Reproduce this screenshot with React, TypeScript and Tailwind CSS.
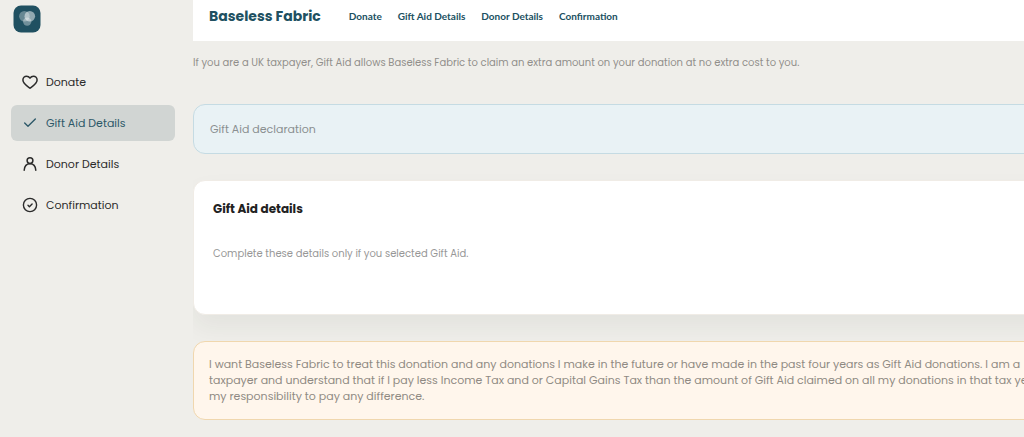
import type { ReactNode } from 'react';
import { Check } from 'lucide-react';

const topLinks = ['Donate', 'Gift Aid Details', 'Donor Details', 'Confirmation'];

const HeartIcon = () => (
  <svg className="size-4" viewBox="0 0 16 16" fill="none" stroke="currentColor" strokeWidth="1.5" strokeLinecap="round" strokeLinejoin="round">
    <path d="M8 14.2C6.6 13 0.9 10 0.9 6.1 0.9 3.9 2.5 2.2 4.6 2.2 6 2.2 7.2 2.9 8 4.2 8.8 2.9 10 2.2 11.4 2.2c2.1 0 3.7 1.7 3.7 3.9C15.1 10 9.4 13 8 14.2z" />
  </svg>
);

const UserIcon = () => (
  <svg className="size-4" viewBox="0 0 16 16" fill="none" stroke="currentColor" strokeWidth="1.5" strokeLinecap="round">
    <circle cx="8" cy="4.6" r="2.9" />
    <path d="M2.2 14.2C2.5 10.2 4.8 7.8 8 7.8s5.5 2.4 5.8 6.4" />
  </svg>
);

const CircleCheckIcon = () => (
  <svg className="size-4" viewBox="0 0 16 16" fill="none" stroke="currentColor" strokeWidth="1.4" strokeLinecap="round" strokeLinejoin="round">
    <circle cx="8" cy="8" r="6.6" />
    <path d="M6 8.3l1.4 1.4L10.1 7" />
  </svg>
);

const Logo = () => (
  <svg className="size-7" viewBox="0 0 28 28" aria-label="Baseless Fabric">
    <rect x="0.5" y="0.5" width="27" height="27" rx="7.5" fill="#205061" />
    <circle cx="11.4" cy="11.2" r="5.3" fill="#fff" fillOpacity="0.32" />
    <circle cx="16.8" cy="11.2" r="5.3" fill="#fff" fillOpacity="0.5" />
    <circle cx="14.2" cy="16.6" r="4.2" fill="#fff" fillOpacity="0.36" />
  </svg>
);

interface SideLinkProps {
  icon: ReactNode;
  label: string;
  active?: boolean;
}

const SideLink = ({ icon, label, active }: SideLinkProps) => (
  <a
    href="#"
    aria-current={active ? 'page' : undefined}
    className={
      active
        ? 'flex h-9 items-center gap-2 rounded-md bg-[#d1d5d3] px-[11px] text-[#2c5868]'
        : 'flex h-9 items-center gap-2 rounded-md px-[11px] text-[#2b2b2b]'
    }
  >
    {icon}
    <span className="text-[11px] leading-4">{label}</span>
  </a>
);

export default function App() {
  return (
    <div className="flex min-h-screen overflow-hidden bg-[#efeeea] font-[Poppins,Inter,sans-serif]">
      {/* Sidebar */}
      <aside className="w-[193px] shrink-0 pt-[5px] pr-[18px] pl-[11px]">
        <a href="#" className="ml-0.5 block w-7">
          <Logo />
        </a>
        <nav className="mt-[31px] flex flex-col gap-[5px]">
          <SideLink icon={<HeartIcon />} label="Donate" />
          <SideLink icon={<Check className="size-4" strokeWidth={2} />} label="Gift Aid Details" active />
          <SideLink icon={<UserIcon />} label="Donor Details" />
          <SideLink icon={<CircleCheckIcon />} label="Confirmation" />
        </nav>
      </aside>

      {/* Content runs past the right edge of the window */}
      <div className="-mr-8 min-w-0 flex-1 overflow-hidden">
        <header className="flex h-[41px] items-start gap-7 bg-white px-4 pt-1.5 text-[#205061]">
          <span className="text-sm leading-5 font-bold">Baseless Fabric</span>
          <nav className="flex gap-4 font-[Lato,sans-serif] text-[10px] leading-5 font-bold">
            {topLinks.map((label) => (
              <a key={label} href="#">
                {label}
              </a>
            ))}
          </nav>
        </header>

        <main>
          <p className="mt-3 text-[10px] leading-5 text-[#918f8b]">
            If you are a UK taxpayer, Gift Aid allows Baseless Fabric to claim an extra amount on your donation at no extra cost to you.
          </p>

          <div className="mt-[31px] rounded-xl border border-[#c5dbe3] bg-[#e9f2f5] px-4 py-4 text-[11px] leading-4 text-[#8a8f90]">
            Gift Aid declaration
          </div>

          <section className="mt-[26px] rounded-xl border border-[#f0ece6] bg-white px-[19px] pt-[18px] pb-[50px] shadow-[0_12px_24px_rgba(40,50,40,0.06)]">
            <h2 className="text-xs leading-5 font-bold text-[#222222]">Gift Aid details</h2>
            <p className="mt-[25px] text-[10px] leading-5 text-[#979797]">Complete these details only if you selected Gift Aid.</p>
          </section>

          <div className="mt-[26px] rounded-xl border border-[#f0d7ae] bg-[#fff6ec] px-[15px] pt-3.5 pb-[15px] text-[11px] leading-4 whitespace-nowrap text-[#8f8a83]">
            I want Baseless Fabric to treat this donation and any donations I make in the future or have made in the past four years as Gift Aid donations. I am a
            <br />
            taxpayer and understand that if I pay less Income Tax and or Capital Gains Tax than the amount of Gift Aid claimed on all my donations in that tax year
            <br />
            my responsibility to pay any difference.
          </div>
        </main>
      </div>
    </div>
  );
}
